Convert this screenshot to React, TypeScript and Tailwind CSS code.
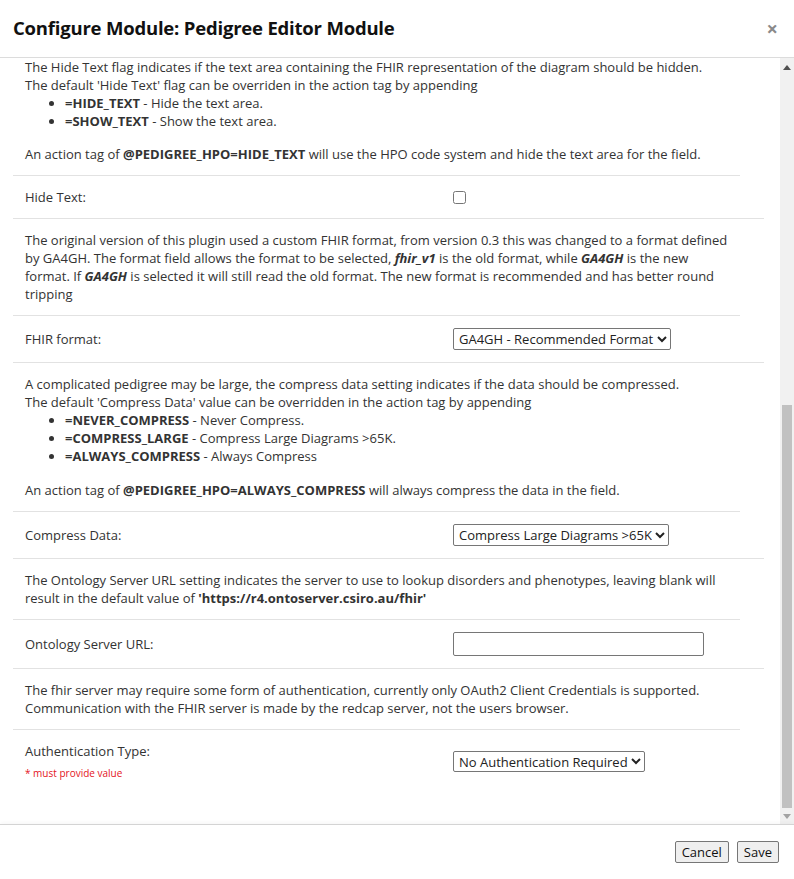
const DescRow = ({ children, first }: { children: React.ReactNode; first?: boolean }) => (
  <div
    className={
      first
        ? "w-[727px] border-b border-[#e2e2e2] px-[12px] pb-[12px] leading-[18px]"
        : "w-[727px] border-b border-[#e2e2e2] px-[12px] pt-[12px] pb-[12px] leading-[18px]"
    }
  >
    {children}
  </div>
);

const FieldRow = ({
  label,
  note,
  children,
}: {
  label: string;
  note?: string;
  children: React.ReactNode;
}) => (
  <div className="w-[751px] flex items-center border-b border-[#e2e2e2] py-[12px] leading-[18px]">
    <div className="w-[440px] pl-[12px] shrink-0">
      <div>{label}</div>
      {note && <div className="text-[10px] text-[#e4141c] mt-[4px]">{note}</div>}
    </div>
    <div className="flex-1 flex items-center">{children}</div>
  </div>
);

const selectCls =
  "border border-[#767676] rounded-[2px] h-[22px] pl-[1px] text-[13px] text-[#222] bg-white";

const Scrollbar = () => (
  <div className="w-[14px] bg-[#f1f1f1] flex flex-col items-center">
    <div className="h-[16px] w-full flex items-center justify-center pt-[2px]">
      <svg width="8" height="5" viewBox="0 0 8 5">
        <polygon points="0,5 8,5 4,0" fill="#505050" />
      </svg>
    </div>
    <div className="flex-1 w-full flex flex-col justify-end px-[2px] pb-[1px]">
      <div className="h-[403px] w-full bg-[#c1c1c1]" />
    </div>
    <div className="h-[15px] w-full flex items-center justify-center">
      <svg width="8" height="5" viewBox="0 0 8 5">
        <polygon points="0,0 8,0 4,5" fill="#a3a3a3" />
      </svg>
    </div>
  </div>
);

const App = () => {
  return (
    <div className="w-[794px] h-[879px] flex flex-col bg-white text-[13px] text-[#333] font-['Open_Sans',sans-serif]">
      <div className="h-[58px] shrink-0 flex items-center justify-between pl-[13px] pr-[16px] border-b border-[#dcdcdc]">
        <h4 className="text-[18.5px] font-bold text-[#111] tracking-[-0.2px] leading-none">
          Configure Module: Pedigree Editor Module
        </h4>
        <span className="text-[20px] font-bold text-[#8a8a8a] leading-none">×</span>
      </div>

      <div className="flex-1 flex overflow-hidden">
        <div className="flex-1 pl-[13px] overflow-hidden">
          <DescRow first>
            <div>
              The Hide Text flag indicates if the text area containing the FHIR
              representation of the diagram should be hidden.
            </div>
            <div>The default 'Hide Text' flag can be overriden in the action tag by appending</div>
            <ul className="list-disc pl-[40px] mb-[15px]">
              <li>
                <b>=HIDE_TEXT</b> - Hide the text area.
              </li>
              <li>
                <b>=SHOW_TEXT</b> - Show the text area.
              </li>
            </ul>
            <div>
              An action tag of <b>@PEDIGREE_HPO=HIDE_TEXT</b> will use the HPO code
              system and hide the text area for the field.
            </div>
          </DescRow>

          <FieldRow label="Hide Text:">
            <input type="checkbox" className="w-[13px] h-[13px]" />
          </FieldRow>

          <DescRow>
            The original version of this plugin used a custom FHIR format, from
            version 0.3 this was changed to a format defined by GA4GH. The format
            field allows the format to be selected, <b><i>fhir_v1</i></b> is the old
            format, while <b><i>GA4GH</i></b> is the new format. If{" "}
            <b><i>GA4GH</i></b> is selected it will still read the old format. The
            new format is recommended and has better round tripping
          </DescRow>

          <FieldRow label="FHIR format:">
            <select className={selectCls} defaultValue="ga4gh">
              <option value="ga4gh">GA4GH - Recommended Format</option>
              <option value="fhir_v1">fhir_v1</option>
            </select>
          </FieldRow>

          <DescRow>
            <div>
              A complicated pedigree may be large, the compress data setting
              indicates if the data should be compressed.
            </div>
            <div>The default 'Compress Data' value can be overridden in the action tag by appending</div>
            <ul className="list-disc pl-[40px] mb-[16px]">
              <li>
                <b>=NEVER_COMPRESS</b> - Never Compress.
              </li>
              <li>
                <b>=COMPRESS_LARGE</b> - Compress Large Diagrams &gt;65K.
              </li>
              <li>
                <b>=ALWAYS_COMPRESS</b> - Always Compress
              </li>
            </ul>
            <div>
              An action tag of <b>@PEDIGREE_HPO=ALWAYS_COMPRESS</b> will always
              compress the data in the field.
            </div>
          </DescRow>

          <FieldRow label="Compress Data:">
            <select className={selectCls} defaultValue="large">
              <option value="large">Compress Large Diagrams &gt;65K</option>
              <option value="never">Never Compress</option>
              <option value="always">Always Compress</option>
            </select>
          </FieldRow>

          <DescRow>
            The Ontology Server URL setting indicates the server to use to lookup
            disorders and phenotypes, leaving blank will result in the default value
            of <b>'https://r4.ontoserver.csiro.au/fhir'</b>
          </DescRow>

          <FieldRow label="Ontology Server URL:">
            <input
              type="text"
              className="w-[251px] h-[24px] border border-[#767676] rounded-[2px] px-[3px]"
            />
          </FieldRow>

          <DescRow>
            The fhir server may require some form of authentication, currently only
            OAuth2 Client Credentials is supported. Communication with the FHIR
            server is made by the redcap server, not the users browser.
          </DescRow>

          <div className="w-[751px] flex items-start pt-[12px] leading-[18px]">
            <div className="w-[440px] pl-[12px] shrink-0">
              <div>Authentication Type:</div>
              <div className="text-[10px] text-[#e4141c] mt-[4px]">* must provide value</div>
            </div>
            <div className="flex-1 pt-[9px]">
              <select
                className="border border-[#767676] rounded-[2px] h-[21px] pl-[1px] text-[13px] text-[#222] bg-white"
                defaultValue="none"
              >
                <option value="none">No Authentication Required</option>
                <option value="oauth2">OAuth2 Client Credentials</option>
              </select>
            </div>
          </div>
        </div>
        <Scrollbar />
      </div>

      <div className="h-[55px] shrink-0 flex items-center justify-end gap-[8px] pr-[15px] border-t border-[#d4d4d4] shadow-[0_-2px_4px_rgba(0,0,0,0.03)]">
        <button className="h-[22px] px-[6px] border border-[#767676] rounded-[2px] bg-[#efefef] text-[13px] text-[#111] leading-none">
          Cancel
        </button>
        <button className="h-[22px] px-[6px] border border-[#767676] rounded-[2px] bg-[#efefef] text-[13px] text-[#111] leading-none">
          Save
        </button>
      </div>
    </div>
  );
};

export default App;
